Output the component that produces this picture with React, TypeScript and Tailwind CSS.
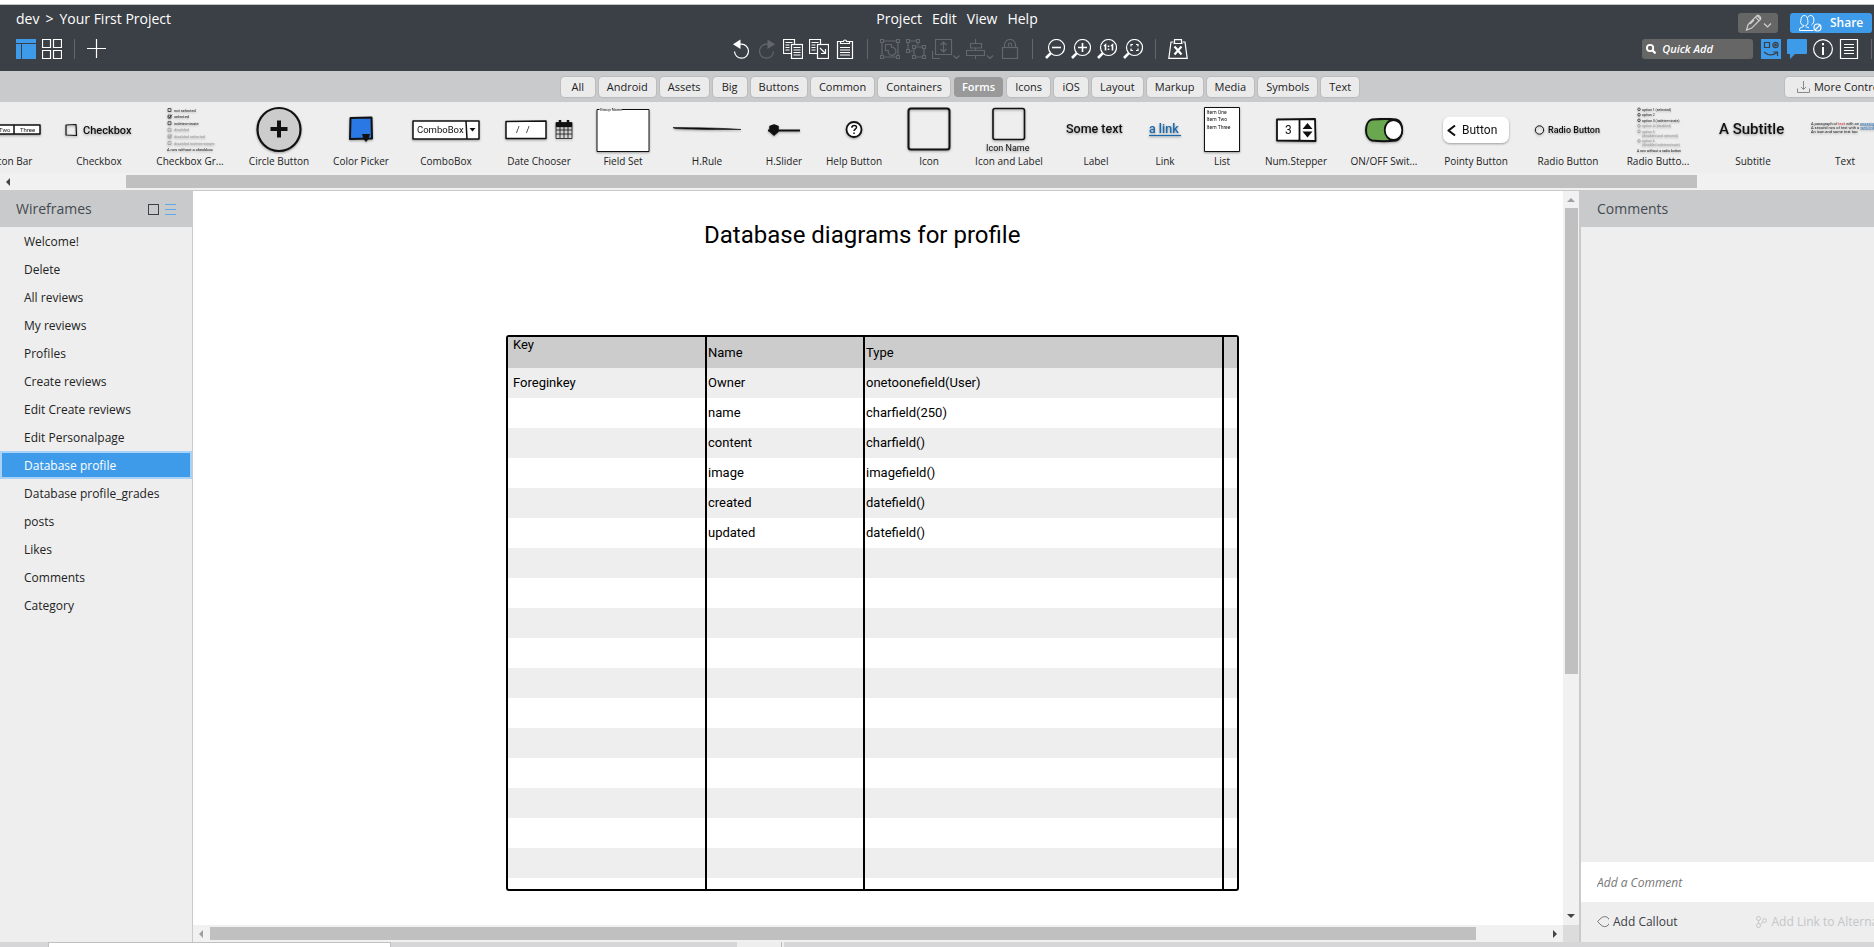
import React from "react";

const SKETCH = "[font-family:Roboto,Lato,sans-serif]";

/* ---------- header icons ---------- */

type IconProps = { children: React.ReactNode; w?: number; className?: string };

function Icon({ children, w = 20, className = "text-white" }: IconProps) {
  return (
    <svg
      width={w}
      height={20}
      viewBox={`0 0 ${w} 20`}
      fill="none"
      stroke="currentColor"
      strokeWidth={1.2}
      className={`block shrink-0 ${className}`}
      aria-hidden="true"
    >
      {children}
    </svg>
  );
}

function IconButton({
  label,
  children,
  w,
  disabled,
  className,
}: {
  label: string;
  children: React.ReactNode;
  w?: number;
  disabled?: boolean;
  className?: string;
}) {
  return (
    <button type="button" aria-label={label} disabled={disabled} className="shrink-0">
      <Icon w={w} className={disabled ? "text-[#63676b]" : className}>
        {children}
      </Icon>
    </button>
  );
}

function Divider() {
  return <span className="mx-1.5 h-5 w-px shrink-0 bg-[#63676b]" />;
}

function Magnifier({ children }: { children: React.ReactNode }) {
  return (
    <>
      <circle cx="11.5" cy="8.5" r="8" />
      <path d="M5.8 14.2 1 19" strokeWidth="2.6" />
      {children}
    </>
  );
}

function CenterTools() {
  return (
    <div className="flex items-center gap-1.5">
      <IconButton label="Undo">
        <path d="M5 5.2h5.5a7 7 0 1 1-7 7.3" />
        <path d="M2 5.2 9.5.5V10Z" fill="currentColor" stroke="none" />
      </IconButton>
      <IconButton label="Redo" disabled>
        <path d="M15 5.2H9.5a7 7 0 1 0 7 7.3" />
        <path d="M18 5.2 10.5.5V10Z" fill="currentColor" stroke="none" />
      </IconButton>
      <IconButton label="Copy">
        <path d="M8 14.5H.5V.5h11v5" />
        <rect x="8.5" y="5.5" width="11" height="14" />
        <path d="M2.5 3.5h7M2.5 6h4M2.5 8.5h4M2.5 11h4M10.5 8.5h7M10.5 11h7M10.5 13.5h7M10.5 16h7" />
      </IconButton>
      <IconButton label="Duplicate">
        <path d="M8 14.5H.5V.5h11v5" />
        <rect x="8.5" y="5.5" width="11" height="14" />
        <path d="M2.5 3.5h7M2.5 6h4M2.5 8.5h4M2.5 11h4M11 9l5 5M16.500 10v4.500H12" />
      </IconButton>
      <IconButton label="Paste">
        <path d="M5 2.5H2.5v17h15v-17H15" />
        <path d="M5.5 4.5v-2h3a1.5 1.5 0 0 1 3 0h3v2ZM5 8.5h10M5 11h10M5 13.5h10M5 16h10" />
      </IconButton>
      <Divider />
      <IconButton label="Group" disabled>
        <path d="M2 4v12M18 4v12M4 2h12M4 18h12" />
        <path d="M.5.5h3v3h-3zM16.5.5h3v3h-3zM.5 16.5h3v3h-3zM16.5 16.5h3v3h-3z" />
        <path d="M5.5 5.5h6v2.800a4 4 0 1 1-3.200 5.700v-2.500H5.500Z" />
      </IconButton>
      <IconButton label="Ungroup" disabled>
        <path d="M.5.5h3v3h-3zM10.5.5h3v3h-3zM.5 10.5h3v3h-3zM6.5 6.5h3v3h-3zM16.5 6.5h3v3h-3zM6.5 16.5h3v3h-3zM16.5 16.5h3v3h-3z" />
        <path d="M3.5 2h7M2 3.5v7M12 3.5v3M3.5 12H7M9.5 8h7M8 9.5v7M18 9.5v7M9.5 18h7" />
      </IconButton>
      <IconButton label="Arrange" w={28} disabled>
        <path d="M3.5.5h16v15h-16zM.5 12v7.500H8M11.500 3v10M8.500 6l3-3 3 3M8.500 10l3 3 3-3M21.500 16.500l3 3 3-3" />
      </IconButton>
      <IconButton label="Align" w={28} disabled>
        <path d="M9.5 0v4.500M9.500 9v2.500M9.500 16.500V20M4.500 4.500h11v4.500h-11zM.5 11.500h18v5H.5zM21 16.500l3 3 3-3" />
      </IconButton>
      <IconButton label="Lock" disabled>
        <rect x="2.5" y="8.5" width="15" height="11" />
        <path d="M4.5 8.5V6a5.500 5.500 0 0 1 11 0v2.500M8.500 7.500v-2a1.500 1.500 0 0 1 3 0v2" />
      </IconButton>
      <Divider />
      <IconButton label="Zoom out">
        <Magnifier>
          <path d="M7 8.5h9" strokeWidth="1.6" />
        </Magnifier>
      </IconButton>
      <IconButton label="Zoom in">
        <Magnifier>
          <path d="M7 8.5h9M11.5 4v9" strokeWidth="1.6" />
        </Magnifier>
      </IconButton>
      <IconButton label="Actual size">
        <Magnifier>
          <path d="M7 7l1.500-1.200v5.700M14 7l1.500-1.200v5.700" strokeWidth="1.6" />
          <path d="M11.500 6.500v1.600M11.500 9.500v1.600" strokeWidth="1.6" />
        </Magnifier>
      </IconButton>
      <IconButton label="Zoom to fit">
        <Magnifier>
          <path d="M8 7.5V5.500h2M13 5.500h2v2M15 9.500v2h-2M10 11.500H8v-2" />
        </Magnifier>
      </IconButton>
      <Divider />
      <IconButton label="Clear markup">
        <path d="M5.5 3H3L.8 19.400h18.400L17 3h-2.500" />
        <path d="M6.5.6h7v3.900h-7zM5.500 4.500h9" />
        <path d="M6.5 7.500l7 8M13.500 7.500l-7 8" strokeWidth="2.2" />
      </IconButton>
    </div>
  );
}

function Header() {
  return (
    <header className="shrink-0 border-t border-[#c4c4c4] bg-[#3b4046] text-[13px] text-white">
      <div className="grid h-[30px] grid-cols-[1fr_auto_1fr] items-center pb-0.5 pl-10">
        <nav aria-label="Breadcrumb" className="-ml-6 flex gap-1.5 whitespace-nowrap text-sm leading-5">
          <a href="#dev">dev</a>
          <span>&gt;</span>
          <a href="#project">Your First Project</a>
        </nav>
        <nav aria-label="Main menu" className="flex gap-2.5 text-sm leading-5">
          {["Project", "Edit", "View", "Help"].map((m) => (
            <button key={m} type="button">
              {m}
            </button>
          ))}
        </nav>
        <div className="flex items-center justify-end gap-3 pt-2 pr-0.5">
          <button
            type="button"
            aria-label="Markup"
            className="flex h-5 w-10 items-center justify-center rounded-[3px] bg-[#666]"
          >
            <Icon w={28} className="text-[#d0d0d0]">
              <path d="M2.5 17l1.600-5.500L13 2.600l3.600 3.600-8.900 8.900ZM11.500 4.200l3.600 3.600M13 2.600c1.200-1.400 4.800 2 3.600 3.600M6 11l4-4M20 10.500l3.500 3.500 3.500-3.500" />
            </Icon>
          </button>
          <button
            type="button"
            className="flex h-5 w-[82px] items-center gap-2 rounded-[3px] bg-[#3e9be9] pl-2 text-xs font-semibold"
          >
            <Icon w={24}>
              <path
                strokeWidth="1"
                d="M1.500 17.500h14M1.500 17.500v-1.500c0-2 4.500-1.500 4.500-3.500C3.200 12 2.200 10.500 2.800 7.500 3 4 4.500 2.500 6.300 2.500s3.300 1.500 3.500 5c.6 3-.4 4.500-2.200 5 0 1.500 2 1.800 3.400 2.400M9.800 4.500c.5-1.300 1.600-2 2.900-2 1.800 0 3.200 1.500 3.200 4.500 0 2.500-1 4-2.500 5"
              />
              <circle cx="19.5" cy="14.5" r="3.5" />
              <path d="M17 17l5-5" />
            </Icon>
            Share
          </button>
        </div>
      </div>
      <div className="grid h-9 grid-cols-[1fr_auto_1fr] items-start pt-1 pl-11">
        <div className="-ml-7 flex items-center gap-1.5">
          <button type="button" aria-label="Single view" className="shrink-0">
            <Icon className="text-[#3e9be9]">
              <path d="M0 0h20v4H0zM0 5h5v15H0zM6 5h14v15H6z" fill="currentColor" stroke="none" />
            </Icon>
          </button>
          <IconButton label="Grid view">
            <path d="M.5.5h8v8h-8zM11.5.5h8v8h-8zM.5 11.5h8v8h-8zM11.5 11.5h8v8h-8z" />
          </IconButton>
          <Divider />
          <IconButton label="Add wireframe">
            <path d="M0 9.5h19M9.500 0v19" />
          </IconButton>
        </div>
        <CenterTools />
        <div className="flex items-center justify-end gap-1.5 pr-0.5">
          <label className="mr-0.5 flex h-5 w-[111px] items-center gap-1.5 rounded-[3px] bg-[#666] pl-1">
            <svg width="12" height="12" viewBox="0 0 12 12" fill="none" stroke="#fff" strokeWidth="2.2" aria-hidden="true">
              <circle cx="4.8" cy="4.8" r="3.7" />
              <path d="M7.5 7.5l3.800 3.800" strokeWidth="2.8" />
            </svg>
            <input
              type="text"
              aria-label="Quick Add"
              placeholder="Quick Add"
              className="w-full min-w-0 bg-transparent text-[11px] font-semibold italic outline-none placeholder:text-white"
            />
          </label>
          <IconButton label="UI library" className="text-[#3b4046]">
            <path d="M0 0h20v20H0z" fill="#3e9be9" stroke="none" />
            <path d="M3.5 3.5h5v5h-5zM3 13c4 3.500 9 3.500 13 .5M12 13h4.500v4" />
            <circle cx="14.5" cy="6" r="2.6" />
            <circle cx="14.5" cy="6" r=".8" />
          </IconButton>
          <IconButton label="Comments" className="text-[#3e9be9]">
            <path d="M1 0h18a1 1 0 0 1 1 1v13a1 1 0 0 1-1 1H8l-5 5v-5H1a1 1 0 0 1-1-1V1a1 1 0 0 1 1-1Z" fill="currentColor" stroke="none" />
          </IconButton>
          <IconButton label="Project information">
            <circle cx="10" cy="10" r="9.4" />
            <path d="M10 8v8M10 4v2.200" strokeWidth="2" />
          </IconButton>
          <IconButton label="Notes">
            <path d="M1.5.5h17v19h-17zM5 5.500h10M5 8.500h10M5 11.500h10M5 14.500h10" />
          </IconButton>
          <span className="ml-1.5 h-5 w-px bg-[#63676b]" />
        </div>
      </div>
    </header>
  );
}

/* ---------- category tabs ---------- */

const CATEGORIES = [
  "All", "Android", "Assets", "Big", "Buttons", "Common", "Containers", "Forms",
  "Icons", "iOS", "Layout", "Markup", "Media", "Symbols", "Text",
];

function Categories() {
  return (
    <div className="grid h-[31px] shrink-0 grid-cols-[1fr_auto_1fr] items-center overflow-hidden bg-[#c9cacc] pt-px pl-[46px] text-[11px] text-[#222]">
      <span />
      <div className="flex gap-1">
        {CATEGORIES.map((c) => (
          <button
            key={c}
            type="button"
            className={
              c === "Forms"
                ? "h-5 min-w-[34px] rounded bg-[#999] px-2 font-semibold text-white"
                : "h-5 min-w-[34px] rounded bg-[#ebebeb] px-2 shadow-[0_0_0_1px_#bcbcbc]"
            }
          >
            {c}
          </button>
        ))}
      </div>
      <button
        type="button"
        className="-mr-[34px] flex h-5 items-center gap-1 justify-self-end rounded bg-[#ebebeb] px-3 whitespace-nowrap shadow-[0_0_0_1px_#bcbcbc]"
      >
        <svg width="13" height="13" viewBox="0 0 13 13" fill="none" stroke="#888" aria-hidden="true">
          <path d="M.5 7.500v4h12v-4M6.500 0v8.500M4 6l2.500 2.500L9 6" />
        </svg>
        More Controls...
      </button>
    </div>
  );
}

/* ---------- control palette ---------- */

function Thumb({ w = 68, children }: { w?: number; children: React.ReactNode }) {
  return (
    <svg
      width={w}
      height={46}
      viewBox={`0 0 ${w} 46`}
      fill="none"
      stroke="#111"
      strokeWidth={1.5}
      strokeLinejoin="round"
      className={`block overflow-visible drop-shadow-[0_1px_1px_rgba(0,0,0,0.35)] ${SKETCH}`}
      aria-hidden="true"
    >
      {children}
    </svg>
  );
}

function T({
  x,
  y,
  s,
  fill = "#111",
  bold,
  children,
}: {
  x: number;
  y: number;
  s: number;
  fill?: string;
  bold?: boolean;
  children: React.ReactNode;
}) {
  return (
    <text x={x} y={y} fontSize={s} fill={fill} stroke="none" fontWeight={bold ? 500 : 400}>
      {children}
    </text>
  );
}

const CHECK_ROWS = [
  ["not selected", "#222"],
  ["selected", "#222"],
  ["indeterminate", "#222"],
  ["disabled", "#999"],
  ["disabled selected", "#999"],
  ["disabled indeterminate", "#999"],
];

type Control = { label: string; width: string; art: React.ReactNode };

const CONTROLS: Control[] = [
  {
    label: "Button Bar",
    width: "w-[92px]",
    art: (
      <Thumb>
        <path d="M1 18h66v9H1ZM20 18v9M41 18v9" fill="#fff" />
        <T x={5} y={25} s={6}>One</T>
        <T x={26} y={25} s={6}>Two</T>
        <T x={47} y={25} s={6}>Three</T>
      </Thumb>
    ),
  },
  {
    label: "Checkbox",
    width: "w-[92px]",
    art: (
      <Thumb>
        <path d="M1 18l10-.5.5 11L1 28Z" strokeWidth="1.2" />
        <T x={18} y={27} s={11} bold>Checkbox</T>
      </Thumb>
    ),
  },
  {
    label: "Checkbox Gr...",
    width: "w-[90px]",
    art: (
      <Thumb w={46}>
        {CHECK_ROWS.map(([text, color], i) => (
          <g key={text}>
            <rect x="1" y={1.5 + i * 6.6} width="3" height="3" stroke={color} strokeWidth=".7" />
            {(i === 1 || i === 4) && <path d={`M1.5 ${2.8 + i * 6.6}l1 1.200 2.500-3`} stroke={color} strokeWidth=".8" />}
            <T x={7} y={4.5 + i * 6.6} s={4} fill={color}>{text}</T>
          </g>
        ))}
        <T x={0} y={44} s={4}>A row without a checkbox</T>
      </Thumb>
    ),
  },
  {
    label: "Circle Button",
    width: "w-[88px]",
    art: (
      <Thumb w={46}>
        <circle cx="23" cy="22.5" r="21.5" fill="#ccc" strokeWidth="2.2" />
        <path d="M23 13.5v17M14.5 22h17" strokeWidth="4" />
      </Thumb>
    ),
  },
  {
    label: "Color Picker",
    width: "w-[76px]",
    art: (
      <Thumb w={26}>
        <path d="M2.5 11l21-.5.5 21-22 .5Z" fill="#2a78e4" strokeWidth="2" />
        <path d="M14 27h8l-1.500 5-2.500 3-2.500-3Z" fill="#111" stroke="none" />
      </Thumb>
    ),
  },
  {
    label: "ComboBox",
    width: "w-[94px]",
    art: (
      <Thumb>
        <path d="M1 14h66v18H1ZM54 14l1 18" fill="#fff" />
        <T x={5} y={26} s={9.5}>ComboBox</T>
        <path d="M57.5 21h6l-3 3.500Z" fill="#111" stroke="none" />
      </Thumb>
    ),
  },
  {
    label: "Date Chooser",
    width: "w-[92px]",
    art: (
      <Thumb>
        <path d="M1 14.5 41 14v17.500H1Z" fill="#fff" />
        <T x={11} y={26} s={9}>/</T>
        <T x={21} y={26} s={9}>/</T>
        <path d="M51 15.5h16v16H51ZM51 23h16M51 27h16M55 19v12M59 19v12M63 19v12" strokeWidth=".8" />
        <path d="M51 15.5h16V20H51Z" fill="#111" stroke="none" />
        <path d="M55 13v4M63 13v4" strokeWidth="2.4" />
      </Thumb>
    ),
  },
  {
    label: "Field Set",
    width: "w-[76px]",
    art: (
      <Thumb w={54}>
        <path d="M1 2.5h52v42H1Z" fill="#fff" stroke="none" />
        <path d="M3.5 2.5H1v42h52v-42H26" strokeWidth="1" />
        <T x={4} y={3.5} s={4}>Group Name</T>
      </Thumb>
    ),
  },
  {
    label: "H.Rule",
    width: "w-[92px]",
    art: (
      <Thumb>
        <path d="M0 20.5c20 .2 50 .5 68 2-18 .2-50 0-66-1Z" strokeWidth=".6" fill="#111" />
      </Thumb>
    ),
  },
  {
    label: "H.Slider",
    width: "w-[62px]",
    art: (
      <Thumb w={34}>
        <path d="M1 23.5h32" strokeWidth="2" />
        <path d="M3 19.5l4-1.500 4 1.500v5L7 28l-4-3.500Z" fill="#111" />
      </Thumb>
    ),
  },
  {
    label: "Help Button",
    width: "w-[78px]",
    art: (
      <Thumb w={18}>
        <circle cx="9" cy="22.5" r="7.5" fill="#fff" strokeWidth="1.8" />
        <path d="M6.8 20.8c0-3.300 5-3 4.700-.3-.2 1.700-2.500 1.600-2.500 3.500M9 25.500v1.600" strokeWidth="1.5" />
      </Thumb>
    ),
  },
  {
    label: "Icon",
    width: "w-[72px]",
    art: (
      <Thumb w={44}>
        <rect x="1.5" y="1.5" width="41" height="41" rx="2.5" strokeWidth="2" />
      </Thumb>
    ),
  },
  {
    label: "Icon and Label",
    width: "w-[88px]",
    art: (
      <Thumb w={48}>
        <rect x="8" y="1.5" width="31.5" height="31" rx="2" strokeWidth="1.6" />
        <T x={1} y={43.5} s={9}>Icon Name</T>
      </Thumb>
    ),
  },
  {
    label: "Label",
    width: "w-[86px]",
    art: (
      <Thumb w={60}>
        <T x={0} y={26} s={12.5} bold>Some text</T>
      </Thumb>
    ),
  },
  {
    label: "Link",
    width: "w-[52px]",
    art: (
      <Thumb w={32}>
        <T x={0} y={26} s={12.5} fill="#1a6ab0" bold>a link</T>
        <path d="M0 28.5h32" stroke="#1a6ab0" strokeWidth="1.2" />
      </Thumb>
    ),
  },
  {
    label: "List",
    width: "w-[62px]",
    art: (
      <Thumb w={36}>
        <path d="M.5.5h35v44H.5Z" fill="#fff" strokeWidth="1" />
        <T x={2.5} y={6.5} s={5}>Item One</T>
        <T x={2.5} y={14} s={5}>Item Two</T>
        <T x={2.5} y={21.5} s={5}>Item Three</T>
      </Thumb>
    ),
  },
  {
    label: "Num.Stepper",
    width: "w-[86px]",
    art: (
      <Thumb w={40}>
        <path d="M1 12.5l38-.5.500 22L1 33.500ZM23.500 12v21.500" fill="#fff" strokeWidth="1.8" />
        <T x={9} y={27} s={12}>3</T>
        <path d="M26.5 22l5-6 5 6ZM26.500 24.500h10l-5 6Z" fill="#111" stroke="none" />
      </Thumb>
    ),
  },
  {
    label: "ON/OFF Swit...",
    width: "w-[90px]",
    art: (
      <Thumb w={40}>
        <path d="M8 12.5c8-.7 20-.5 24 0 8 2 8 18 0 21-6 .8-18 .8-24 0-8-2-8-19 0-21Z" fill="#6aa84f" strokeWidth="2" />
        <ellipse cx="29.5" cy="23" rx="8.8" ry="10" fill="#fff" strokeWidth="1.8" />
      </Thumb>
    ),
  },
  {
    label: "Pointy Button",
    width: "w-[94px]",
    art: (
      <Thumb>
        <rect x="1" y="9.5" width="66" height="26.5" rx="7" fill="#fff" stroke="none" />
        <path d="M13 18.5l-6.500 5 6.500 5" strokeWidth="2.2" />
        <T x={20} y={26.5} s={12}>Button</T>
      </Thumb>
    ),
  },
  {
    label: "Radio Button",
    width: "w-[90px]",
    art: (
      <Thumb>
        <circle cx="5.5" cy="23" r="4.2" strokeWidth="1" />
        <T x={14} y={26} s={9} bold>Radio Button</T>
      </Thumb>
    ),
  },
  {
    label: "Radio Butto...",
    width: "w-[90px]",
    art: (
      <Thumb w={42}>
        {[
          [3.5, "option 1 (selected)", "#222"],
          [9, "option 2", "#222"],
          [14.5, "option 3 (indeterminate)", "#222"],
          [20, "option 4 (disabled)", "#999"],
          [25.5, "option 5", "#999"],
          [29.5, "(disabled and selected)", "#999"],
          [35, "option 6", "#999"],
          [39, "(disabled indeterminate)", "#999"],
        ].map(([y, text, color]) => (
          <g key={String(text)}>
            {!String(text).startsWith("(") && (
              <circle cx="2" cy={Number(y) - 1.2} r="1.3" stroke={String(color)} strokeWidth=".7" />
            )}
            <T x={5} y={Number(y)} s={3.5} fill={String(color)}>{text}</T>
          </g>
        ))}
        <T x={0} y={44.5} s={3.5}>A row without a radio button</T>
      </Thumb>
    ),
  },
  {
    label: "Subtitle",
    width: "w-[100px]",
    art: (
      <Thumb>
        <T x={0} y={26.5} s={15} bold>A Subtitle</T>
      </Thumb>
    ),
  },
  {
    label: "Text",
    width: "w-[84px]",
    art: (
      <Thumb>
        <text x="0" y="17.5" fontSize="4" fill="#222" stroke="none">
          A paragraph of <tspan fill="#e02020">text</tspan> with an <tspan fill="#1a6ab0" textDecoration="underline">unassigned link</tspan>.
        </text>
        <text x="0" y="21.5" fontSize="4" fill="#222" stroke="none">
          A second row of text with a <tspan fill="#1a6ab0" textDecoration="underline">web link</tspan>
        </text>
        <T x={0} y={25.5} s={4}>An icon and some text too</T>
      </Thumb>
    ),
  },
];

function Palette() {
  return (
    <section aria-label="Controls" className="shrink-0 overflow-hidden border-b border-[#c9cacc] bg-[#eee]">
      <ul className="-ml-[39px] flex h-[71px] pt-[5px]">
        {CONTROLS.map((c) => (
          <li key={c.label} className={`flex shrink-0 flex-col items-center ${c.width}`}>
            {c.art}
            <span className="text-[10px] leading-4 whitespace-nowrap text-[#222]">{c.label}</span>
          </li>
        ))}
      </ul>
      <div className="flex h-[17px] items-center bg-[#f1f1f1]" aria-hidden="true">
        <svg width="4" height="8" viewBox="0 0 4 8" className="ml-1.5">
          <path d="M4 0v8L0 4Z" fill="#444" />
        </svg>
        <div className="mr-[177px] ml-[116px] h-[13px] flex-1 bg-[#c0c0c0]" />
      </div>
    </section>
  );
}

/* ---------- left panel ---------- */

const WIREFRAMES = [
  "Welcome!", "Delete", "All reviews", "My reviews", "Profiles", "Create reviews",
  "Edit Create reviews", "Edit Personalpage", "Database profile", "Database profile_grades",
  "posts", "Likes", "Comments", "Category",
];

function Sidebar() {
  return (
    <aside className="w-[193px] shrink-0 border-r border-[#c9cacc] bg-[#eee]">
      <div className="flex h-9 items-center bg-[#c9cacc] px-4">
        <h2 className="flex-1 text-sm text-[#444a50]">Wireframes</h2>
        <button type="button" aria-label="Thumbnails" className="mr-1.5 size-[11px] border border-[#3b4046]" />
        <button type="button" aria-label="List" className="flex h-[11px] w-[11px] flex-col justify-between">
          <span className="h-px w-full bg-[#5fa9ea]" />
          <span className="h-px w-full bg-[#5fa9ea]" />
          <span className="h-px w-full bg-[#5fa9ea]" />
        </button>
      </div>
      <ul className="text-xs text-[#222]">
        {WIREFRAMES.map((w) => (
          <li key={w}>
            <a
              href={`#${w}`}
              className={
                w === "Database profile"
                  ? "flex h-7 items-center border-2 border-[#a9d2f6] bg-[#3e9be9] pt-px pl-[22px] font-medium text-white"
                  : "flex h-7 items-center pt-px pl-6"
              }
            >
              {w}
            </a>
          </li>
        ))}
      </ul>
    </aside>
  );
}

/* ---------- canvas ---------- */

const ROWS: string[][] = [
  ["Foreginkey", "Owner", "onetoonefield(User)"],
  ["", "name", "charfield(250)"],
  ["", "content", "charfield()"],
  ["", "image", "imagefield()"],
  ["", "created", "datefield()"],
  ["", "updated", "datefield()"],
  ...Array.from({ length: 11 }, () => ["", "", ""]),
];

function Diagram() {
  return (
    <div className={`ml-[313px] w-[733px] text-black ${SKETCH}`}>
      <h1 className="pt-7 pl-[198px] text-2xl leading-8 whitespace-nowrap">
        Database diagrams for profile
      </h1>
      <table className="mt-[84px] w-full table-fixed border-separate border-spacing-0 rounded-[3px] border-2 border-black text-[13px] leading-4">
        <colgroup>
          <col className="w-[199px]" />
          <col className="w-[158px]" />
          <col />
          <col className="w-[13px]" />
        </colgroup>
        <thead>
          <tr className="h-[31px] bg-[#ccc] text-left">
            <th className="border-r-2 border-black pl-[5px] align-top font-normal">Key</th>
            <th className="border-r-2 border-black pl-px font-normal">Name</th>
            <th className="border-r-2 border-black pl-px font-normal">Type</th>
            <th aria-label="Empty" />
          </tr>
        </thead>
        <tbody>
          {ROWS.map((r, i) => (
            <tr key={i} className="h-[30px] odd:bg-[#eee]">
              <td className="border-r-2 border-black pl-[5px]">{r[0]}</td>
              <td className="border-r-2 border-black pl-px">{r[1]}</td>
              <td className="border-r-2 border-black pl-px">{r[2]}</td>
              <td />
            </tr>
          ))}
          <tr className="h-[11px]">
            <td className="border-r-2 border-black" />
            <td className="border-r-2 border-black" />
            <td className="border-r-2 border-black" />
            <td />
          </tr>
        </tbody>
      </table>
    </div>
  );
}

function Canvas() {
  return (
    <main className="flex min-w-0 flex-1 flex-col">
      <div className="flex min-h-0 flex-1">
        <div className="min-w-0 flex-1 overflow-hidden bg-white">
          <Diagram />
        </div>
        <div className="flex w-4 shrink-0 flex-col items-center bg-[#f1f1f1]" aria-hidden="true">
          <svg width="8" height="4" viewBox="0 0 8 4" className="mt-[7px] mb-1.5">
            <path d="M0 4h8L4 0Z" fill="#a0a0a0" />
          </svg>
          <div className="w-[13px] flex-1 bg-[#c0c0c0]" />
          <svg width="8" height="4" viewBox="0 0 8 4" className="mt-[240px] mb-[7px]">
            <path d="M0 0h8L4 4Z" fill="#444" />
          </svg>
        </div>
      </div>
      <div className="flex h-[17px] shrink-0 items-center bg-[#f1f1f1]" aria-hidden="true">
        <svg width="4" height="8" viewBox="0 0 4 8" className="mr-[7px] ml-1.5">
          <path d="M4 0v8L0 4Z" fill="#a0a0a0" />
        </svg>
        <div className="h-[13px] flex-1 bg-[#c0c0c0]" />
        <svg width="4" height="8" viewBox="0 0 4 8" className="mr-1.5 ml-[77px]">
          <path d="M0 0v8l4-4Z" fill="#444" />
        </svg>
        <span className="h-full w-4 bg-[#dcdcdc]" />
      </div>
    </main>
  );
}

/* ---------- comments ---------- */

function Comments() {
  return (
    <aside className="flex w-[295px] shrink-0 flex-col overflow-hidden border-l-2 border-[#c9cacc] bg-[#eee]">
      <h2 className="flex h-9 items-center bg-[#c9cacc] pl-4 text-sm text-[#444a50]">Comments</h2>
      <div className="flex-1" />
      <input
        type="text"
        aria-label="Add a Comment"
        placeholder="Add a Comment"
        className="h-10 bg-white px-4 text-xs italic outline-none placeholder:text-[#777]"
      />
      <div className="flex h-10 items-center gap-[78px] pl-4 text-xs whitespace-nowrap">
        <button type="button" className="flex shrink-0 items-center gap-1 text-[#3b4046]">
          <svg width="12" height="12" viewBox="0 0 12 12" fill="none" stroke="#777" aria-hidden="true">
            <path d="M.5 5.5 4 2.200a5 5 0 1 1 0 6.800Z" />
          </svg>
          Add Callout
        </button>
        <button type="button" disabled className="flex shrink-0 items-center gap-[5px] text-[#c4c6c8]">
          <svg width="11" height="12" viewBox="0 0 11 12" fill="none" stroke="#c4c6c8" aria-hidden="true">
            <circle cx="2.5" cy="2.5" r="2" />
            <circle cx="2.5" cy="9.5" r="2" />
            <circle cx="8.5" cy="4.5" r="1.9" />
            <path d="M2.5 4.500v3M4.300 8.500 7 6" />
          </svg>
          Add Link to Alternate
        </button>
      </div>
    </aside>
  );
}

export default function App() {
  return (
    <div className="flex h-screen flex-col overflow-hidden bg-white pt-1 [font-family:'Open_Sans','Noto_Sans',sans-serif]">
      <Header />
      <Categories />
      <Palette />
      <div className="flex min-h-0 flex-1">
        <Sidebar />
        <Canvas />
        <Comments />
      </div>
      <div className="flex h-[5px] shrink-0 bg-[#d6d6d9]" aria-hidden="true">
        <span className="ml-12 w-[343px] border border-b-0 border-[#c0c0c0] bg-white" />
        <span className="ml-[346px] w-[45px] border-r border-[#bbb] bg-[#eee]" />
        <span className="w-0.5 bg-[#eee]" />
      </div>
    </div>
  );
}
